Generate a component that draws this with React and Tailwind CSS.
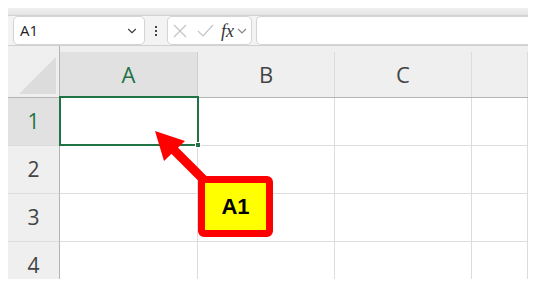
import React from 'react';
import { ChevronDown } from 'lucide-react';

const cols = ['A', 'B', 'C', ''];
const rows = [1, 2, 3, 4];

export default function App() {
  return (
    <div className="relative w-[546px] h-[290px] bg-white pl-2 overflow-hidden" style={{ fontFamily: '"Open Sans", "Noto Sans", sans-serif' }}>
      <div className="relative w-[520px] h-[279px] overflow-hidden flex flex-col bg-[#f3f3f3]">
        {/* ribbon edge */}
        <div className="h-[8px] bg-white shrink-0" />
        <div className="h-[8px] shrink-0 bg-gradient-to-b from-[#f0f0f0] to-[#e4e4e4] border-b border-[#d2d2d2]" />

        {/* formula bar */}
        <div className="h-[30px] shrink-0 flex items-start border-b border-[#d0d0d0] bg-[#f3f3f3]">
          <div className="ml-[5px] w-[132px] h-[29px] bg-white border border-[#d4d4d4] rounded-[5px] flex items-center justify-between pl-[6px] pr-[5px]">
            <span className="text-[15px] text-[#222]">A1</span>
            <ChevronDown className="w-[14px] h-[14px] text-[#444]" strokeWidth={2} />
          </div>
          <div className="w-[22px] h-[29px] flex flex-col items-center justify-center gap-[2px]">
            <span className="w-[2px] h-[2px] bg-[#444]" />
            <span className="w-[2px] h-[2px] bg-[#444]" />
            <span className="w-[2px] h-[2px] bg-[#444]" />
          </div>
          <div className="w-[85px] h-[29px] bg-white border border-[#d4d4d4] rounded-[5px] flex items-center pl-[4px]">
            <svg width="14" height="14" viewBox="0 0 14 14" className="ml-[1px]">
              <path d="M1 1 L13 13 M13 1 L1 13" stroke="#c4c4c4" strokeWidth="1.2" fill="none" />
            </svg>
            <svg width="17" height="14" viewBox="0 0 17 14" className="ml-[10px]">
              <path d="M1 7 L6 12 L16 1" stroke="#c4c4c4" strokeWidth="1.2" fill="none" />
            </svg>
            <span className="ml-[7px] text-[18px] leading-none italic text-[#333]" style={{ fontFamily: '"Liberation Serif", serif' }}>fx</span>
            <svg width="10" height="7" viewBox="0 0 10 7" className="ml-[3px] mt-[2px]">
              <path d="M1 1 L5 5 L9 1" stroke="#888" strokeWidth="1.2" fill="none" />
            </svg>
          </div>
          <div className="ml-[4px] flex-1 h-[29px] bg-white border-l border-t border-b border-[#d4d4d4] rounded-l-[5px]" />
        </div>

        {/* sheet grid */}
        <div className="grid grid-cols-[52px_138px_137px_137px_1fr] grid-rows-[52px_48px_48px_48px_48px] bg-white">
          {/* corner */}
          <div className="bg-[#efefef] border-r border-b border-[#b4b4b4] flex items-end justify-end pr-[3px] pb-[3px]">
            <div className="w-[37px] h-[37px] bg-[#dcdcdc] [clip-path:polygon(100%_0,100%_100%,0_100%)]" />
          </div>
          {cols.map((c, i) => (
            <div key={i} className="bg-[#efefef] border-b border-[#b4b4b4] flex items-end">
              <div className={`w-full h-[45px] flex items-center justify-center text-[22px] ${i === 0 ? 'bg-[#e1e1e1] text-[#217346] border-r border-[#cfcfcf]' : 'text-[#444] border-r border-[#dcdcdc]'}`}>
                {c}
              </div>
            </div>
          ))}
          {rows.map((r) => (
            <React.Fragment key={r}>
              <div className={`border-r border-b border-r-[#b4b4b4] border-b-[#dcdcdc] flex items-center justify-center text-[21px] ${r === 1 ? 'bg-[#e1e1e1] text-[#217346]' : 'bg-[#efefef] text-[#444]'}`}>
                {r}
              </div>
              {cols.map((c, i) => (
                <div key={i} className="border-r border-b border-[#dcdcdc]" />
              ))}
            </React.Fragment>
          ))}
        </div>

        {/* active cell */}
        <div className="absolute left-[51px] top-[96px] w-[140px] h-[50px] border-2 border-[#217346]" />
        <div className="absolute left-[187px] top-[142px] w-[6px] h-[6px] bg-[#217346] border border-white" />
      </div>

      {/* callout arrow */}
      <svg className="absolute left-0 top-0" width="546" height="290">
        <line x1="166" y1="142" x2="212" y2="188" stroke="#ff0000" strokeWidth="9" />
        <polygon points="155,131 185,141 164,161" fill="#ff0000" />
      </svg>
      <div className="absolute left-[198px] top-[176px] w-[75px] h-[61px] bg-[#ffff00] border-[7px] border-[#ff0000] rounded-[6px] flex items-center justify-center">
        <span className="text-[22px] font-bold text-black" style={{ fontFamily: '"Liberation Sans", Arial, sans-serif' }}>A1</span>
      </div>
    </div>
  );
}
